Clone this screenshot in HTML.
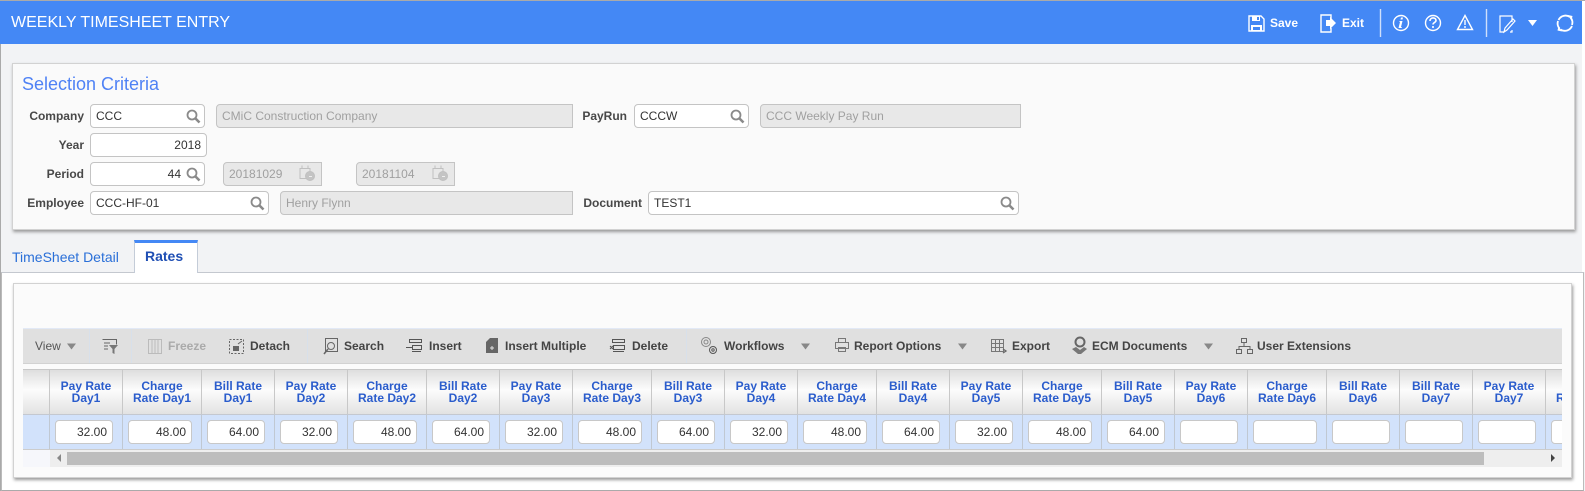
<!DOCTYPE html>
<html><head><meta charset="utf-8"><style>
html,body{margin:0;padding:0}
body{width:1585px;height:491px;position:relative;overflow:hidden;background:#f2f3f5;font-family:"Liberation Sans",sans-serif;font-size:12px;color:#333}
.a,.l,.i,.d,.t,.s,.h,.c,.n,.v{position:absolute;box-sizing:border-box}
.l{font-weight:bold;color:#484848;text-align:right;height:16px;line-height:16px;white-space:nowrap}
.i,.d{height:24px;line-height:22px;border:1px solid #c4c4c4;border-radius:4px;background:#fff;padding:0 5px;color:#333;white-space:nowrap}
.d{background:#e8e8e8;color:#a0a0a0;border-radius:4px 0 0 4px}
.r{text-align:right}
.t{font-weight:bold;color:#444;line-height:16px;height:16px;top:338px;white-space:nowrap}
.s{top:329px;height:34px;width:1px;background:#d8e0ea}
.h{top:369px;height:45px;border-right:1px solid #c8c8c8;border-top:1px solid #c8c8c8;background:linear-gradient(#dedede,#fcfcfc 45%,#e2e2e2);color:#2a5ccc;font-weight:bold;text-align:center;line-height:12px;padding-top:10px;overflow:hidden}
.c{top:414px;height:35px;border-right:1px solid #c0c8d2;border-top:1px solid #c4c8d0;background:#d2e2fb}
.n{top:420px;height:24px;line-height:22px;border:1px solid #c8c8c8;border-radius:4px;background:#fff;text-align:right;padding-right:5px;color:#333}
svg{position:absolute;overflow:visible}
</style></head><body>
<div class="a" style="left:0;top:0;width:1585px;height:1px;background:#aaa"></div>
<div class="a" style="left:0;top:44px;width:1px;height:447px;background:#aaa"></div>
<div class="a" style="left:1582px;top:1px;width:3px;height:271px;background:#fff"></div>
<div class="a" style="left:0;top:1px;width:1582px;height:43px;background:#4488f5"></div>
<div class="a" style="left:11px;top:13px;color:#fff;font-size:16px;line-height:20px;white-space:nowrap">WEEKLY TIMESHEET ENTRY</div>

<svg style="left:0;top:0" width="1585" height="44" fill="none" stroke="#fff" stroke-width="1.4">
<path d="M1249 16h12l3 3v12h-15z"/><path fill="#fff" stroke="none" d="M1252 16h8v5h-8zM1251 25h11v6h-11z"/><path fill="#4488f5" stroke="none" d="M1257 17h2v3h-2zM1253 27h7v3h-7z"/>
<path d="M1331 19v-4h-10v17h10v-4"/><path fill="#fff" stroke="none" d="M1326 20h4v-3l6 6-6 6v-3h-4z"/>
<path d="M1380.5 9v28M1486.500 9v28" stroke="#cfdffb"/>
<circle cx="1401" cy="23" r="7.500"/><path fill="#fff" stroke="none" d="M1401 17.500h2l-.5 2h-2zM1400 21h2.500l-1.500 6h1l-.5 1h-3l1.500-6h-1z"/>
<circle cx="1433" cy="23" r="7.500"/><path d="M1430 21c0-4 6-4 6-.5 0 2-3 2-3 4" stroke-width="1.600"/><path d="M1433 26v2" stroke-width="1.600"/>
<path d="M1465 15.500l7.500 14h-15z"/><path d="M1465 20v5M1465 26v2"/>
<path d="M1504 16h-4v16h4M1500 16h12v6M1510 32h2v-2" stroke-width="1.200"/><path d="M1504 32l1-4 8-9 2 2-8 9z" stroke-width="1.200"/>
<path fill="#fff" stroke="none" d="M1528 20h9l-4.500 6z"/>
<path d="M1558.500 20a7.800 7.800 0 0 1 11.500-3M1572 26a7.800 7.800 0 0 1-11.500 3.500" stroke-width="1.800"/><path d="M1558 21a7.800 7.800 0 0 0 1.500 7.500M1572 25a7.800 7.800 0 0 0-1.500-7.500" stroke-width="1.800"/><path fill="#fff" stroke="none" d="M1568 15l4.500 1-1 4.500zM1562 31.500l-4.500-1 1-4.500z"/>
</svg>
<div class="a" style="left:1270px;top:15px;color:#fff;font-weight:bold;line-height:16px">Save</div>
<div class="a" style="left:1342px;top:15px;color:#fff;font-weight:bold;line-height:16px">Exit</div>

<!-- Selection panel -->
<div class="a" style="left:12px;top:63px;width:1563px;height:167px;background:#fafafa;border:1px solid #d2d2d2;box-shadow:1px 2px 3px #999"></div>
<div class="a" style="left:22px;top:73px;font-size:18px;line-height:22px;color:#4f82f5">Selection Criteria</div>

<div class="l" style="right:1501px;top:108px">Company</div>
<div class="i" style="left:90px;top:104px;width:115px">CCC</div>
<div class="d" style="left:216px;top:104px;width:357px">CMiC Construction Company</div>
<div class="l" style="right:958px;top:108px">PayRun</div>
<div class="i" style="left:634px;top:104px;width:115px">CCCW</div>
<div class="d" style="left:760px;top:104px;width:261px">CCC Weekly Pay Run</div>

<div class="l" style="right:1501px;top:137px">Year</div>
<div class="i r" style="left:90px;top:133px;width:117px">2018</div>

<div class="l" style="right:1501px;top:166px">Period</div>
<div class="i r" style="left:90px;top:162px;width:115px;padding-right:23px">44</div>
<div class="d" style="left:223px;top:162px;width:99px">20181029</div>
<div class="d" style="left:356px;top:162px;width:99px">20181104</div>

<div class="l" style="right:1501px;top:195px">Employee</div>
<div class="i" style="left:90px;top:191px;width:179px">CCC-HF-01</div>
<div class="d" style="left:280px;top:191px;width:293px">Henry Flynn</div>
<div class="l" style="right:943px;top:195px">Document</div>
<div class="i" style="left:648px;top:191px;width:371px">TEST1</div>

<svg style="left:0;top:0" width="1585" height="230" fill="none" stroke="#8a8a8a">
<g stroke-width="1.800"><circle cx="192" cy="115" r="4.500"/><path d="M195.500 118.500l4 4" stroke-width="2.600"/>
<circle cx="192" cy="173" r="4.500"/><path d="M195.500 176.500l4 4" stroke-width="2.600"/>
<circle cx="256" cy="202" r="4.500"/><path d="M259.500 205.500l4 4" stroke-width="2.600"/>
<circle cx="736" cy="115" r="4.500"/><path d="M739.500 118.500l4 4" stroke-width="2.600"/>
<circle cx="1006" cy="202" r="4.500"/><path d="M1009.500 205.500l4 4" stroke-width="2.600"/></g>
<g stroke="#c0c0c0"><path d="M300 168.500h10v10h-10zM302 165.500v3M308 165.500v3"/><circle cx="310" cy="176" r="4.500" fill="#c4c4c4"/><path d="M309 176.500h3" stroke="#eee"/>
<path d="M433 168.500h10v10h-10zM435 165.500v3M441 165.500v3"/><circle cx="443" cy="176" r="4.500" fill="#c4c4c4"/><path d="M442 176.500h3" stroke="#eee"/></g>
</svg>

<!-- Tabs -->
<div class="a" style="left:1px;top:272px;width:1583px;height:219px;background:#fff;border:1px solid #bbb;border-top:1px solid #c4c8cf;border-bottom:1px solid #aaa"></div>
<div class="a" style="left:12px;top:248px;font-size:14px;line-height:18px;color:#2a6fd8;white-space:nowrap">TimeSheet Detail</div>
<div class="a" style="left:134px;top:240px;width:64px;height:33px;background:#fff;border:1px solid #c4ccd8;border-top:3px solid #4488f5;border-bottom:0;font-size:14px;font-weight:bold;color:#1f4fb4;line-height:27px;padding-left:10px">Rates</div>

<!-- Lower panel -->
<div class="a" style="left:13px;top:283px;width:1559px;height:195px;background:#fbfbfb;border:1px solid #d2d2d2;box-shadow:1px 2px 3px #999"></div>

<!-- Toolbar -->
<div class="a" style="left:23px;top:328px;width:1539px;height:36px;background:#e0e0e0;border-top:1px solid #e2e9f6;border-bottom:1px solid #d2d2d2"></div>
<div class="t" style="left:35px;font-weight:normal;color:#555">View</div>
<div class="s" style="left:89px"></div><div class="s" style="left:131px"></div><div class="s" style="left:307px"></div><div class="s" style="left:686px"></div>
<div class="t" style="left:168px;color:#aaa">Freeze</div>
<div class="t" style="left:250px">Detach</div>
<div class="t" style="left:344px">Search</div>
<div class="t" style="left:429px">Insert</div>
<div class="t" style="left:505px">Insert Multiple</div>
<div class="t" style="left:632px">Delete</div>
<div class="t" style="left:724px">Workflows</div>
<div class="t" style="left:854px">Report Options</div>
<div class="t" style="left:1012px">Export</div>
<div class="t" style="left:1092px">ECM Documents</div>
<div class="t" style="left:1257px">User Extensions</div>

<svg style="left:0;top:0" width="1585" height="370" fill="none" stroke="#666" stroke-width="1">
<g fill="#888" stroke="none"><path d="M67 343.500h9l-4.500 6zM801 343.500h9l-4.500 6zM958 343.500h9l-4.500 6zM1204 343.500h9l-4.500 6z"/></g>
<path d="M102.500 339.500h14v5M104 343h6M104 346h4M104 349h4"/><path fill="#777" stroke="none" d="M109 345h9l-3.500 4v5l-2-1v-4z"/>
<g stroke="#bbb"><path d="M148.500 339.500h13v14h-13zM152 340v13M155 340v13M158 340v13"/></g>
<path stroke-dasharray="2 1.500" d="M229.500 339.500h14v14h-14z"/><path fill="#666" stroke="none" d="M233 346h6v5h-6z"/><path d="M238 344l4-3"/>
<path d="M325.500 338.500h12v13h-12z"/><circle cx="331" cy="346" r="3.500"/><path d="M328 349l-4 5" stroke-width="1.600"/>
<path d="M409.500 339.500h12v3h-12zM412.500 345.500h9v4h-9zM412 351.500h9M406 347.500h6" stroke="#555"/>
<path fill="#666" stroke="none" d="M490 338h8v15h-12v-11z"/><path stroke="#e0e0e0" d="M490 348h4M492 346v4"/>
<path d="M612.500 339.500h12v3h-12zM613.500 345.500h11v4h-11zM613 351.500h11M610 346l3 3M613 346l-3 3" stroke="#555"/>
<circle cx="706" cy="342" r="4.500" stroke="#888"/><circle cx="706" cy="342" r="2" stroke="#888"/><circle cx="713" cy="350" r="3.500" stroke="#555"/><circle cx="713" cy="350" r="1.200" stroke="#555"/>
<path d="M838.500 342.500v-4h7v4M835.500 342.500h13v6h-13zM838.500 347.500h7v4h-7z" stroke="#777"/>
<path d="M991.500 339.500h12v12h-12zM991.500 343.500h12M991.500 347.500h12M995.500 340v11M999.500 340v11" stroke="#777"/><path d="M1003 349l3 2-3 2" stroke-width="1.300"/>
<circle cx="1080" cy="342" r="4.500" stroke-width="2"/><path fill="#777" stroke="none" d="M1072 349l4-2 4 3 4-3 3 2-6 5h-3z"/>
<path d="M1241.500 338.500h5v4h-5zM1236.500 349.500h5v4h-5zM1247.500 349.500h5v4h-5zM1244 342.500v4M1239 349.500v-3h11v3"/>
</svg>

<!-- Grid -->
<div class="a" style="left:23px;top:369px;width:1539px;height:98px;background:#eee;border:1px solid #d5dbe3;border-top:0"></div>
<div class="a" style="left:23px;top:369px;width:1539px;height:98px;overflow:hidden">
<div style="position:absolute;left:-23px;top:-369px;width:1600px;height:491px">
<div class="h" style="left:23px;width:27px"></div>
<div class="h" style="left:50px;width:73px">Pay Rate<br>Day1</div>
<div class="h" style="left:123px;width:79px">Charge<br>Rate Day1</div>
<div class="h" style="left:202px;width:73px">Bill Rate<br>Day1</div>
<div class="h" style="left:275px;width:73px">Pay Rate<br>Day2</div>
<div class="h" style="left:348px;width:79px">Charge<br>Rate Day2</div>
<div class="h" style="left:427px;width:73px">Bill Rate<br>Day2</div>
<div class="h" style="left:500px;width:73px">Pay Rate<br>Day3</div>
<div class="h" style="left:573px;width:79px">Charge<br>Rate Day3</div>
<div class="h" style="left:652px;width:73px">Bill Rate<br>Day3</div>
<div class="h" style="left:725px;width:73px">Pay Rate<br>Day4</div>
<div class="h" style="left:798px;width:79px">Charge<br>Rate Day4</div>
<div class="h" style="left:877px;width:73px">Bill Rate<br>Day4</div>
<div class="h" style="left:950px;width:73px">Pay Rate<br>Day5</div>
<div class="h" style="left:1023px;width:79px">Charge<br>Rate Day5</div>
<div class="h" style="left:1102px;width:73px">Bill Rate<br>Day5</div>
<div class="h" style="left:1175px;width:73px">Pay Rate<br>Day6</div>
<div class="h" style="left:1248px;width:79px">Charge<br>Rate Day6</div>
<div class="h" style="left:1327px;width:73px">Bill Rate<br>Day6</div>
<div class="h" style="left:1400px;width:73px">Bill Rate<br>Day7</div>
<div class="h" style="left:1473px;width:73px">Pay Rate<br>Day7</div>
<div class="h" style="left:1546px;width:79px">Charge<br>Rate Day7</div>

<div class="c" style="left:23px;width:27px"></div>
<div class="c" style="left:50px;width:73px"></div><div class="c" style="left:123px;width:79px"></div><div class="c" style="left:202px;width:73px"></div>
<div class="c" style="left:275px;width:73px"></div><div class="c" style="left:348px;width:79px"></div><div class="c" style="left:427px;width:73px"></div>
<div class="c" style="left:500px;width:73px"></div><div class="c" style="left:573px;width:79px"></div><div class="c" style="left:652px;width:73px"></div>
<div class="c" style="left:725px;width:73px"></div><div class="c" style="left:798px;width:79px"></div><div class="c" style="left:877px;width:73px"></div>
<div class="c" style="left:950px;width:73px"></div><div class="c" style="left:1023px;width:79px"></div><div class="c" style="left:1102px;width:73px"></div>
<div class="c" style="left:1175px;width:73px"></div><div class="c" style="left:1248px;width:79px"></div><div class="c" style="left:1327px;width:73px"></div>
<div class="c" style="left:1400px;width:73px"></div><div class="c" style="left:1473px;width:73px"></div><div class="c" style="left:1546px;width:79px"></div>

<div class="n" style="left:55px;width:58px">32.00</div><div class="n" style="left:128px;width:64px">48.00</div><div class="n" style="left:207px;width:58px">64.00</div>
<div class="n" style="left:280px;width:58px">32.00</div><div class="n" style="left:353px;width:64px">48.00</div><div class="n" style="left:432px;width:58px">64.00</div>
<div class="n" style="left:505px;width:58px">32.00</div><div class="n" style="left:578px;width:64px">48.00</div><div class="n" style="left:657px;width:58px">64.00</div>
<div class="n" style="left:730px;width:58px">32.00</div><div class="n" style="left:803px;width:64px">48.00</div><div class="n" style="left:882px;width:58px">64.00</div>
<div class="n" style="left:955px;width:58px">32.00</div><div class="n" style="left:1028px;width:64px">48.00</div><div class="n" style="left:1107px;width:58px">64.00</div>
<div class="n" style="left:1180px;width:58px"></div><div class="n" style="left:1253px;width:64px"></div><div class="n" style="left:1332px;width:58px"></div>
<div class="n" style="left:1405px;width:58px"></div><div class="n" style="left:1478px;width:58px"></div><div class="n" style="left:1551px;width:64px"></div>

<div class="a" style="left:23px;top:449px;width:27px;height:18px;background:#f6f7fb;border-top:1px solid #ccc"></div>
<div class="a" style="left:50px;top:449px;width:1512px;height:18px;background:#eee;border-top:1px solid #ccc"></div>
<div class="a" style="left:67px;top:452px;width:1417px;height:13px;background:#bdbdbd"></div>
<svg style="left:0;top:0" width="1585" height="491"><path fill="#888" d="M61 454v8l-4-4z"/><path fill="#444" d="M1551 454v8l4-4z"/></svg>
</div></div>
</body></html>
